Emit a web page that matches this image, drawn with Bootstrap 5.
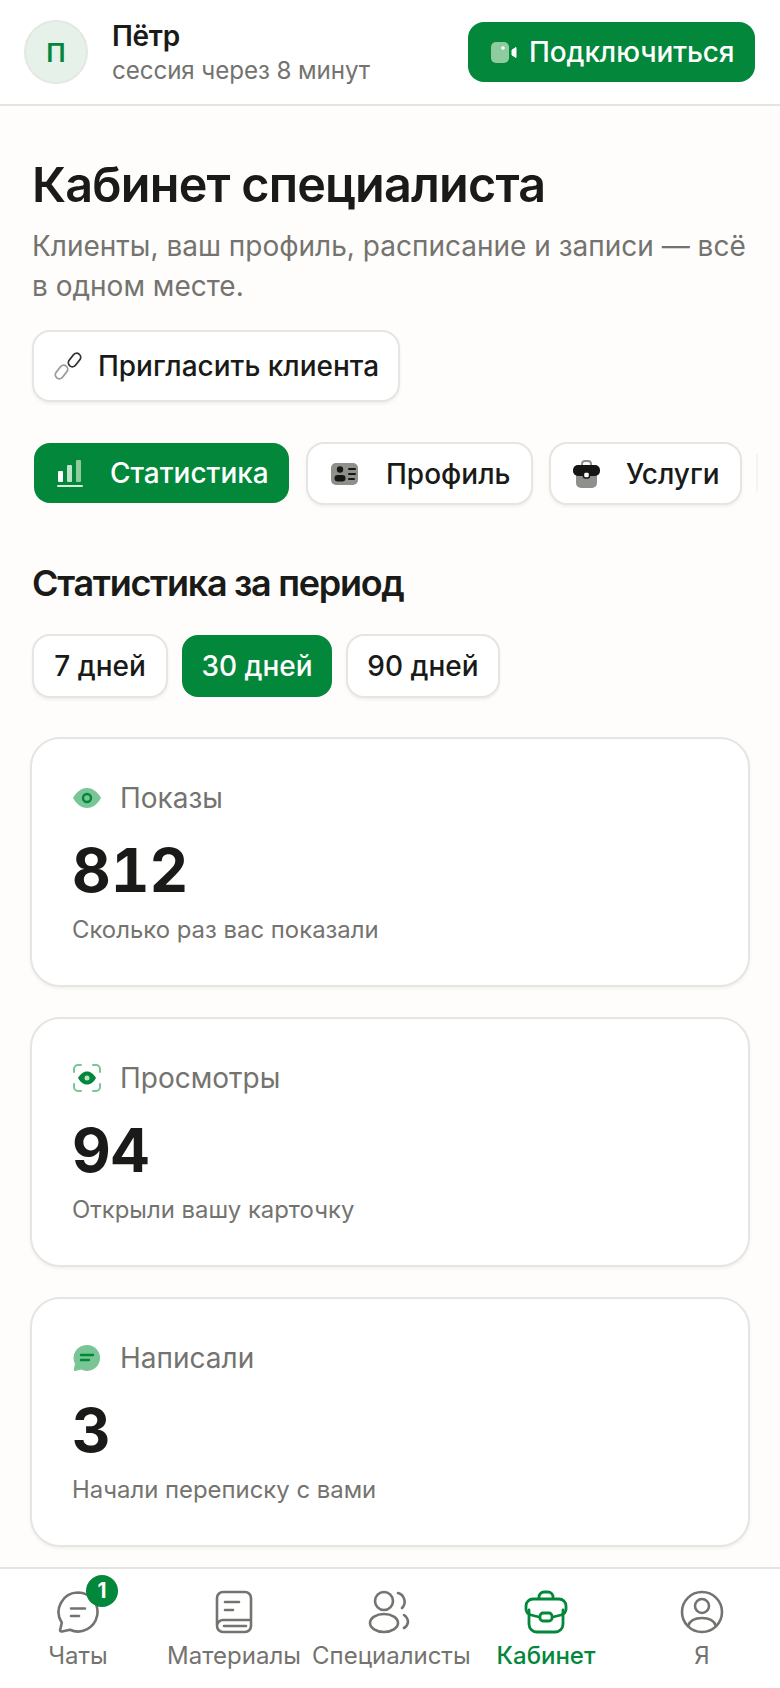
<!DOCTYPE html>
<html lang="ru">
<head>
    <meta charset="UTF-8">
    <meta name="viewport" content="width=device-width, initial-scale=1.0">
    <title>Кабинет специалиста</title>
    <link href="https://cdn.jsdelivr.net/npm/bootstrap@5.3.0/dist/css/bootstrap.min.css" rel="stylesheet">
    <style>
        html, body { height: 100%; }
        body {
            font-family: Inter, "Noto Sans", sans-serif;
            background: #fefdfb;
            color: #1a1a18;
            overflow: hidden;
        }
        .app-shell { height: 1688px; }
        .top-bar { height: 106px; background: #fff; border-bottom: 2px solid #e5e4e1; padding: 0 25px 0 24px; }
        .avatar-circle {
            width: 64px; height: 64px;
            background: #e6f1ea; border: 2px solid #e3e8e3; color: #03873a;
            font-size: 26px; font-weight: 600;
        }
        .peer-text { margin: 2px 0 0 8px; }
        .peer-name { font-size: 28px; font-weight: 600; line-height: 32px; letter-spacing: -.3px; }
        .peer-note { font-size: 24.2px; line-height: 32px; color: #74736f; letter-spacing: -.1px; margin-top: 3px; }
        .btn-connect {
            width: 287px; height: 60px; gap: 12px; padding: 0 0 0 23px;
            background: #03873a; color: #fff; border: 0; border-radius: 16px;
            font-size: 28px; font-weight: 500; letter-spacing: -.1px;
        }
        .btn-connect:hover { background: #03873a; color: #fff; }
        .main-area { padding: 51px 31px 0 32px; min-height: 0; }
        .page-title { font-size: 48.5px; line-height: 56px; font-weight: 600; letter-spacing: -.8px; margin: 0; }
        .page-lead { font-size: 28px; line-height: 40px; color: #74736f; margin: 13px 0 0; }
        .soft-btn {
            background: #fff; color: #1a1a18;
            border: 2px solid #e6e5e2; border-radius: 18px;
            box-shadow: 0 2px 3px rgba(40, 40, 30, .06);
            font-weight: 500;
        }
        .soft-btn:hover { background: #fff; color: #1a1a18; border-color: #e6e5e2; }
        .invite-btn { width: 368px; height: 72px; margin-top: 24px; font-size: 28px; gap: 15px; padding: 0; }
        .tab-row { margin-top: 40px; gap: 17px; overflow: hidden; padding: 0 0 3px 2px; margin-right: -31px; }
        .tab-btn { height: 63px; font-size: 28px; padding: 0; }
        .tab-stat { width: 255px; height: 60px; margin-top: 1px; gap: 27px; padding-left: 23px; border: 0; background: #03873a; color: #fff; border-radius: 16px; box-shadow: none; }
        .tab-stat:hover { background: #03873a; color: #fff; }
        .tab-profile { width: 227px; gap: 28px; padding-left: 23px; }
        .tab-services { width: 193px; margin-left: -1px; gap: 26px; padding-left: 22px; }
        .tab-edge { width: 2px; height: 38px; margin: 12px 0 0 -3px; background: #f5f4f1; }
        .section-title { font-size: 36px; line-height: 44px; font-weight: 600; letter-spacing: -1.3px; margin: 53px 0 0; }
        .range-row { gap: 14px; margin-top: 29px; }
        .range-btn { height: 64px; font-size: 28px; padding: 0; }
        .range-7 { width: 136px; }
        .range-30 { width: 150px; height: 62px; margin-top: 1px; background: #03873a; color: #fff; border: 0; border-radius: 16px; box-shadow: none; }
        .range-30:hover { background: #03873a; color: #fff; }
        .range-90 { width: 154px; }
        .stat-list { gap: 30px; margin-top: 39px; }
        .stat-card {
            height: 250px; width: 720px; margin-left: -2px; padding: 41px 40px 0;
            background: #fff; border: 2px solid #e6e5e2; border-radius: 30px;
            box-shadow: 0 2px 3px rgba(40, 40, 30, .05);
        }
        .stat-head { gap: 18px; font-size: 28px; line-height: 36px; color: #74736f; }
        .stat-icon { width: 30px; height: 30px; flex: none; }
        .stat-num { font-size: 60px; line-height: 72px; font-weight: 700; font-variant-numeric: tabular-nums; margin-top: 18px; }
        .stat-note { font-size: 23.9px; line-height: 32px; color: #74736f; margin-top: 8px; }
        .bottom-bar { height: 121px; background: #fff; border-top: 2px solid #e5e4e1; position: absolute; left: 0; right: 0; top: 1567px; padding: 21px 0 0; }
        .bar-item { flex: 1 1 0; min-width: 0; color: #74736f; font-size: 24px; line-height: 30px; text-align: center; text-decoration: none; white-space: nowrap; }
        .bar-item svg { width: 44px; height: 44px; display: block; margin: 0 auto 7px; }
        .bar-item.is-active { color: #03873a; font-weight: 500; }
        .bar-icon-wrap { position: relative; display: block; }
        .count-dot {
            position: absolute; left: 86px; top: -15px;
            width: 32px; height: 32px;
            background: #03873a; color: #fff;
            font-size: 21px; font-weight: 700; line-height: 32px; text-align: center;
        }
    </style>
</head>
<body>
    <div class="app-shell d-flex flex-column position-relative">
        <!-- Header -->
        <header class="top-bar d-flex align-items-center justify-content-between flex-shrink-0">
            <div class="d-flex align-items-center gap-3">
                <div class="avatar-circle rounded-circle d-flex align-items-center justify-content-center">П</div>
                <div class="peer-text">
                    <div class="peer-name">Пётр</div>
                    <div class="peer-note">сессия через 8 минут</div>
                </div>
            </div>
            <button type="button" class="btn btn-connect d-flex align-items-center">
                <svg width="26" height="21" viewBox="0 0 26 21"><rect width="18" height="21" rx="5" fill="#8ecb9f"/><circle cx="12" cy="6" r="1.800" fill="#fff"/><path d="M21 8l4-2.500v10L21 13z" fill="#fff" stroke="#fff" stroke-linejoin="round"/></svg>
                Подключиться
            </button>
        </header>

        <main class="main-area flex-grow-1">
            <h1 class="page-title">Кабинет специалиста</h1>
            <p class="page-lead">Клиенты, ваш профиль, расписание и записи — всё<br>в одном месте.</p>

            <button type="button" class="btn soft-btn invite-btn d-flex align-items-center justify-content-center">
                <svg width="30" height="30" viewBox="0 0 30 30" fill="none" stroke-width="1.800"><rect x="14" y="5" width="15" height="8" rx="4" stroke="#333331" transform="rotate(-52 21.500 9)"/><rect x="1" y="17" width="15" height="8" rx="4" stroke="#9a9a97" transform="rotate(-52 8.500 21)"/></svg>
                Пригласить клиента
            </button>

            <!-- Tabs -->
            <div class="tab-row d-flex">
                <button type="button" class="btn soft-btn tab-btn tab-stat d-flex align-items-center flex-shrink-0">
                    <svg width="26" height="28" viewBox="0 0 26 28"><rect x="1" y="12" width="5" height="11" rx="1" fill="#fff"/><rect x="10" y="6" width="5" height="17" rx="1" fill="#bfe3c9"/><rect x="19" y="1" width="5" height="22" rx="1" fill="#8ecb9f"/><rect y="26" width="26" height="2" rx="1" fill="#d9f0df"/></svg>
                    Статистика
                </button>
                <button type="button" class="btn soft-btn tab-btn tab-profile d-flex align-items-center flex-shrink-0">
                    <svg width="27" height="24" viewBox="0 0 27 24"><rect width="27" height="22" y="1" rx="5" fill="#8f8f8c"/><circle cx="9" cy="7.500" r="3.200" fill="#161614"/><rect x="3.500" y="13" width="11" height="6.500" rx="3.200" fill="#161614"/><path d="M18 7h6M18 12h6M18 17h5" stroke="#161614" stroke-width="2" stroke-linecap="round"/></svg>
                    Профиль
                </button>
                <button type="button" class="btn soft-btn tab-btn tab-services d-flex align-items-center flex-shrink-0">
                    <svg width="27" height="28" viewBox="0 0 27 28"><path d="M9 5V4a3 3 0 0 1 3-3h3a3 3 0 0 1 3 3v1" fill="none" stroke="#8f8f8c" stroke-width="2"/><path d="M3 10h21v13a5 5 0 0 1-5 5H8a5 5 0 0 1-5-5z" fill="#8f8f8c"/><path d="M5 5h17a5 5 0 0 1 5 5v1a5 5 0 0 1-5 5H5a5 5 0 0 1-5-5v-1a5 5 0 0 1 5-5z" fill="#161614"/><rect x="10.500" y="12" width="6" height="6" rx="2" fill="#fff" stroke="#161614" stroke-width="1.500"/></svg>
                    Услуги
                </button>
                <div class="tab-edge flex-shrink-0"></div>
            </div>

            <h2 class="section-title">Статистика за период</h2>

            <div class="range-row d-flex">
                <button type="button" class="btn soft-btn range-btn range-7">7 дней</button>
                <button type="button" class="btn soft-btn range-btn range-30">30 дней</button>
                <button type="button" class="btn soft-btn range-btn range-90">90 дней</button>
            </div>

            <!-- Stat cards -->
            <div class="stat-list d-flex flex-column" id="statList"></div>
        </main>

        <!-- Bottom navigation -->
        <nav class="bottom-bar d-flex">
            <a href="#" class="bar-item">
                <span class="bar-icon-wrap">
                    <svg viewBox="0 0 44 44" fill="none" stroke="currentColor" stroke-width="2.600" stroke-linecap="round" stroke-linejoin="round"><path d="M22 2.500a19.500 19.500 0 1 1-8 37.300l-8 1.700c-1.400.3-2.200-.6-1.800-1.800l1.600-7A19.500 19.500 0 0 1 22 2.500z"/><path d="M15 18.500h14M15 26h8"/></svg>
                    <span class="count-dot rounded-circle">1</span>
                </span>
                Чаты
            </a>
            <a href="#" class="bar-item">
                <svg viewBox="0 0 44 44" fill="none" stroke="currentColor" stroke-width="2.600" stroke-linecap="round" stroke-linejoin="round"><path d="M5 35V8a6 6 0 0 1 6-6h22a6 6 0 0 1 6 6v28a6 6 0 0 1-6 6H11a6 6 0 0 1-6-6 6 6 0 0 1 6-6h28"/><path d="M13 12h14M13 20h8M12 36h22"/></svg>
                Материалы
            </a>
            <a href="#" class="bar-item">
                <svg viewBox="0 0 44 44" fill="none" stroke="currentColor" stroke-width="2.600" stroke-linecap="round" stroke-linejoin="round"><circle cx="16" cy="11" r="9"/><ellipse cx="16" cy="33" rx="14" ry="9"/><path d="M30 3a9 9 0 0 1 4 15M36 25a9 9 0 0 1 4 7 8 8 0 0 1-4 6"/></svg>
                Специалисты
            </a>
            <a href="#" class="bar-item is-active">
                <svg viewBox="0 0 44 44" fill="none" stroke="currentColor" stroke-width="2.800" stroke-linecap="round" stroke-linejoin="round"><path d="M15 8V7a5 5 0 0 1 5-5h4a5 5 0 0 1 5 5v1"/><path d="M5 20v14a8 8 0 0 0 8 8h18a8 8 0 0 0 8-8V20"/><path d="M9 9h26a7 7 0 0 1 7 7v3c0 3-2 5-5 6l-8 2M15 27l-8-2c-3-1-5-3-5-6v-3a7 7 0 0 1 7-7"/><rect x="16" y="23" width="12" height="8" rx="3"/></svg>
                Кабинет
            </a>
            <a href="#" class="bar-item">
                <svg viewBox="0 0 44 44" fill="none" stroke="currentColor" stroke-width="2.600" stroke-linecap="round" stroke-linejoin="round"><circle cx="22" cy="22" r="20"/><circle cx="22" cy="16" r="7"/><path d="M8 36c2-6 8-8 14-8s12 2 14 8"/></svg>
                Я
            </a>
        </nav>
    </div>

    <script src="https://cdn.jsdelivr.net/npm/bootstrap@5.3.0/dist/js/bootstrap.bundle.min.js"></script>
    <script>
        // Stat card data
        const stats = [
            { label: 'Показы', value: '812', note: 'Сколько раз вас показали',
              icon: '<path d="M1 15C5 8 10 5 15 5s10 3 14 10c-4 7-9 10-14 10S5 22 1 15z" fill="#79c596"/><circle cx="15" cy="15" r="4" fill="none" stroke="#03873a" stroke-width="2.400"/>' },
            { label: 'Просмотры', value: '94', note: 'Открыли вашу карточку',
              icon: '<path d="M2 9V6a4 4 0 0 1 4-4h3M21 2h3a4 4 0 0 1 4 4v3M28 21v3a4 4 0 0 1-4 4h-3M9 28H6a4 4 0 0 1-4-4v-3" fill="none" stroke="#79c596" stroke-width="2" stroke-linecap="round"/><path d="M6 15c3-5 6-6.500 9-6.500s6 1.500 9 6.500c-3 5-6 6.500-9 6.500S9 20 6 15z" fill="#03873a"/><circle cx="15" cy="15" r="2.500" fill="#bfe3c9"/>' },
            { label: 'Написали', value: '3', note: 'Начали переписку с вами',
              icon: '<path d="M15 2a13 13 0 1 1-6 24.500L3 28c-1 .2-1.500-.4-1.300-1.300L3 21A13 13 0 0 1 15 2z" fill="#79c596"/><path d="M9 12h12M9 17h8" stroke="#03873a" stroke-width="2.400" stroke-linecap="round"/>' }
        ];

        document.getElementById('statList').innerHTML = stats.map(s => `
            <div class="stat-card flex-shrink-0">
                <div class="stat-head d-flex align-items-center">
                    <svg class="stat-icon" viewBox="0 0 30 30">${s.icon}</svg>
                    <span>${s.label}</span>
                </div>
                <div class="stat-num">${s.value}</div>
                <div class="stat-note">${s.note}</div>
            </div>
        `).join('');
    </script>
</body>
</html>
